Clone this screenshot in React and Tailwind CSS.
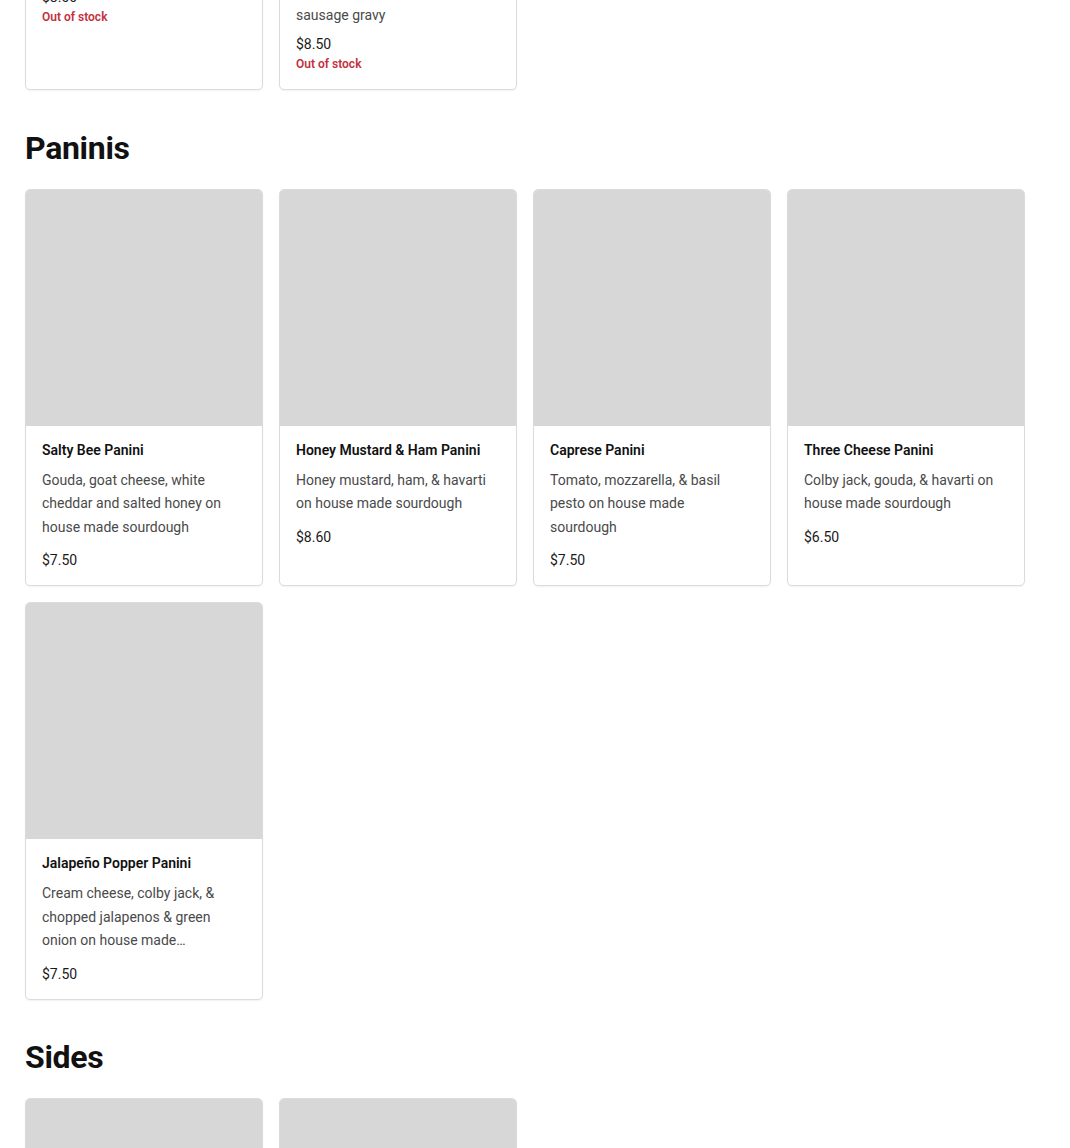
import React from "react";

const sections = [
  {
    name: "Breakfast",
    items: [
      {
        title: "Breakfast Sandwich",
        desc: ["Egg, bacon & cheddar"],
        price: "$8.00",
        out: true,
      },
      {
        title: "Biscuits & Gravy",
        desc: ["Two buttermilk biscuits", "smothered in house made", "sausage gravy"],
        price: "$8.50",
        out: true,
      },
    ],
  },
  {
    name: "Paninis",
    items: [
      {
        title: "Salty Bee Panini",
        desc: "Gouda, goat cheese, white cheddar and salted honey on house made sourdough",
        price: "$7.50",
      },
      {
        title: "Honey Mustard & Ham Panini",
        desc: "Honey mustard, ham, & havarti on house made sourdough",
        price: "$8.60",
      },
      {
        title: "Caprese Panini",
        desc: "Tomato, mozzarella, & basil pesto on house made sourdough",
        price: "$7.50",
      },
      {
        title: "Three Cheese Panini",
        desc: "Colby jack, gouda, & havarti on house made sourdough",
        price: "$6.50",
      },
      {
        title: "Jalapeño Popper Panini",
        desc: "Cream cheese, colby jack, & chopped jalapenos & green onion on house made sourdough",
        price: "$7.50",
      },
    ],
  },
  {
    name: "Sides",
    items: [
      { title: "Chips", desc: "Assorted bagged chips", price: "$1.50" },
      { title: "Side Salad", desc: "Mixed greens with house vinaigrette", price: "$4.00" },
    ],
  },
];

const ItemCard = ({ item }) => {
  return (
    <div className="flex flex-col bg-white border border-[#dcdcdc] rounded-[5px] overflow-hidden shadow-[0_1px_2px_rgba(0,0,0,0.06)]">
      <div className="h-[236px] bg-[#d7d7d7]" />
      <div className={item.out ? "px-4 pt-[14px] pb-[17px]" : "px-4 pt-[14px] pb-[15px]"}>
        <div className="text-[14px] leading-5 font-semibold text-[#111]">{item.title}</div>
        <div className="mt-[9px] text-[14px] leading-[23.5px] text-[#4a4a4a] line-clamp-3">
          {Array.isArray(item.desc)
            ? item.desc.map((line, i) => (
                <React.Fragment key={i}>
                  {line}
                  {i < item.desc.length - 1 && <br />}
                </React.Fragment>
              ))
            : item.desc}
        </div>
        {item.out ? (
          <>
            <div className="mt-2 text-[14px] leading-4 text-[#1a1a1a]">{item.price}</div>
            <div className="mt-1 text-[12px] leading-4 font-semibold text-[#c4313d]">Out of stock</div>
          </>
        ) : (
          <div className="mt-[11px] text-[14px] leading-5 text-[#1a1a1a]">{item.price}</div>
        )}
      </div>
    </div>
  );
};

export default function App() {
  return (
    <div className="min-h-screen bg-white overflow-hidden font-['Roboto',sans-serif]">
      <div className="px-[25px] -mt-[384px]">
        {sections.map((section, idx) => (
          <section
            key={section.name}
            className={idx === 0 ? "" : idx === 1 ? "mt-[38px]" : "mt-[37px]"}
          >
            <h2 className="h-10 leading-10 text-[32px] font-bold text-[#111] tracking-[-0.3px]">
              {section.name}
            </h2>
            <div className="mt-[21px] grid grid-cols-[repeat(4,238px)] gap-4">
              {section.items.map((item) => (
                <ItemCard key={item.title} item={item} />
              ))}
            </div>
          </section>
        ))}
      </div>
    </div>
  );
}
